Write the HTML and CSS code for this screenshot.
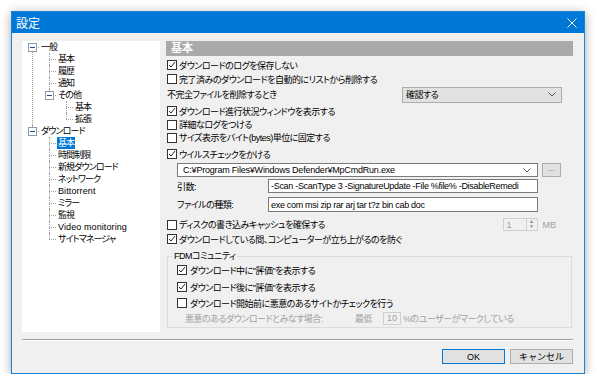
FILE: index.html
```html
<!DOCTYPE html>
<html lang="ja">
<head>
  <meta charset="UTF-8" />
  <title>設定</title>
  <link rel="stylesheet" href="styles.css">
</head>
<body>
  <div class="dialog">
    <div class="titlebar">
      <span class="title">設定</span>
      <svg class="close" width="10" height="10" viewBox="0 0 10 10"><path d="M0.5 0.5l9 9M9.5 0.5l-9 9" stroke="#fff" stroke-width="1" /></svg>
    </div>
    <div class="content">
      <div class="main">
        <!-- Left: category tree -->
        <div class="tree">
          <ul>
            <li>
              <div class="node"><span class="tg"></span><span class="lbl">一般</span></div>
              <ul>
                <li><div class="node"><span class="lbl">基本</span></div></li>
                <li><div class="node"><span class="lbl">履歴</span></div></li>
                <li><div class="node"><span class="lbl">通知</span></div></li>
                <li>
                  <div class="node"><span class="tg"></span><span class="lbl">その他</span></div>
                  <ul>
                    <li><div class="node"><span class="lbl">基本</span></div></li>
                    <li><div class="node"><span class="lbl">拡張</span></div></li>
                  </ul>
                </li>
              </ul>
            </li>
            <li>
              <div class="node"><span class="tg"></span><span class="lbl">ダウンロード</span></div>
              <ul>
                <li><div class="node"><span class="lbl sel">基本</span></div></li>
                <li><div class="node"><span class="lbl">時間制限</span></div></li>
                <li><div class="node"><span class="lbl">新規ダウンロード</span></div></li>
                <li><div class="node"><span class="lbl">ネットワーク</span></div></li>
                <li><div class="node"><span class="lbl en">Bittorrent</span></div></li>
                <li><div class="node"><span class="lbl">ミラー</span></div></li>
                <li><div class="node"><span class="lbl">監視</span></div></li>
                <li><div class="node"><span class="lbl en">Video monitoring</span></div></li>
                <li><div class="node"><span class="lbl">サイトマネージャ</span></div></li>
              </ul>
            </li>
          </ul>
        </div>

        <!-- Right: settings page -->
        <div class="page">
          <div class="page-title">基本</div>
          <div class="row r1"><span class="cb"><svg viewBox="0 0 8 8"><path d="M1 4l2 2 4-5" /></svg></span>ダウンロードのログを保存しない</div>
          <div class="row"><span class="cb"></span>完了済みのダウンロードを自動的にリストから削除する</div>
          <div class="row split">
            <span class="plain">不完全ファイルを削除するとき</span>
            <div class="select">確認する<svg width="8" height="5" viewBox="0 0 8 5"><path d="M0.5 0.5l3.5 3.5 3.5-3.5" /></svg></div>
          </div>
          <div class="row r4"><span class="cb"><svg viewBox="0 0 8 8"><path d="M1 4l2 2 4-5" /></svg></span>ダウンロード進行状況ウィンドウを表示する</div>
          <div class="row short"><span class="cb"></span>詳細なログをつける</div>
          <div class="row short"><span class="cb"></span>サイズ表示をバイト(bytes)単位に固定する</div>
          <div class="row r7"><span class="cb"><svg viewBox="0 0 8 8"><path d="M1 4l2 2 4-5" /></svg></span>ウイルスチェックをかける</div>
          <div class="path-row">
            <div class="combo">C:¥Program Files¥Windows Defender¥MpCmdRun.exe<svg width="8" height="5" viewBox="0 0 8 5"><path d="M0.5 0.5l3.5 3.5 3.5-3.5" /></svg></div>
            <div class="browse">...</div>
          </div>
          <div class="field args">
            <span class="field-label">引数:</span>
            <div class="input">-Scan -ScanType 3 -SignatureUpdate -File %file% -DisableRemedi</div>
          </div>
          <div class="field types">
            <span class="field-label">ファイルの種類:</span>
            <div class="input">exe com msi zip rar arj tar t?z bin cab doc</div>
          </div>
          <div class="row disk">
            <span class="cb"></span>ディスクの書き込みキャッシュを確保する
            <div class="spin-wrap">
              <div class="spin"><span>1</span><span class="arrows"><i>▲</i><i>▼</i></span></div>
              <span class="unit">MB</span>
            </div>
          </div>
          <div class="row"><span class="cb"><svg viewBox="0 0 8 8"><path d="M1 4l2 2 4-5" /></svg></span>ダウンロードしている間、コンピューターが立ち上がるのを防ぐ</div>

          <fieldset class="group">
            <legend>FDMコミュニティ</legend>
            <div class="row g1"><span class="cb"><svg viewBox="0 0 8 8"><path d="M1 4l2 2 4-5" /></svg></span>ダウンロード中に"評価"を表示する</div>
            <div class="row g2"><span class="cb"><svg viewBox="0 0 8 8"><path d="M1 4l2 2 4-5" /></svg></span>ダウンロード後に"評価"を表示する</div>
            <div class="row g3"><span class="cb"></span>ダウンロード開始前に悪意のあるサイトかチェックを行う</div>
            <div class="row g4 disabled">
              <span class="dis-label">悪意のあるダウンロードとみなす場合:</span>
              <span class="dis-min">最低</span>
              <span class="small-input">10</span>
              <span>%のユーザーがマークしている</span>
            </div>
          </fieldset>
        </div>
      </div>

      <div class="sep"></div>
      <div class="buttons">
        <button type="button" class="btn default">OK</button>
        <button type="button" class="btn">キャンセル</button>
      </div>
    </div>
  </div>
</body>
</html>
```

FILE: styles.css
```css
* {
  box-sizing: border-box;
}
body {
  margin: 0;
  background: #fff;
  font-family: "Liberation Sans", "Noto Sans CJK JP", sans-serif;
  font-size: 9px;
  font-feature-settings: "palt";
  color: #000;
}
.dialog {
  margin: 11px 0 0 11px;
  width: 574px;
  height: 363px;
  border: 1px solid #1a83d6;
  background: #f0f0f0;
  box-shadow: 0 2px 10px rgba(0, 0, 0, 0.35);
  display: flex;
  flex-direction: column;
}
.titlebar {
  height: 21px;
  background: #0078d7;
  color: #fff;
  display: flex;
  align-items: center;
  justify-content: space-between;
  padding: 0 7px 0 4px;
  flex-shrink: 0;
}
.title {
  font-size: 12px;
}
.content {
  padding: 8px 11px 9px 10px;
  flex: 1;
  display: flex;
  flex-direction: column;
}
.main {
  display: flex;
  gap: 6px;
  height: 291px;
}

/* Tree (left) */
.tree {
  width: 138px;
  background: #fff;
  letter-spacing: -0.9px;
  overflow: hidden;
}
.tree ul {
  list-style: none;
  margin: 0;
  padding: 0;
}
.tree li ul {
  margin-left: -1px;
}
.tree li {
  position: relative;
  padding-left: 18px;
}
.tree li::before {
  content: "";
  position: absolute;
  left: 10px;
  top: 6px;
  width: 7px;
  border-top: 1px dotted #a0a0a0;
}
.tree li::after {
  content: "";
  position: absolute;
  left: 10px;
  top: 0;
  bottom: 0;
  border-left: 1px dotted #a0a0a0;
}
.tree li:last-child::after {
  bottom: auto;
  height: 6px;
}
.tree > ul > li:first-child::after {
  top: 6px;
  height: auto;
  bottom: 0;
}
.node {
  height: 12px;
  line-height: 12px;
  display: flex;
}
.tg {
  position: absolute;
  left: 6px;
  top: 2px;
  width: 9px;
  height: 9px;
  border: 1px solid #8c9bb0;
  background: #fff;
  z-index: 1;
}
.tg::before {
  content: "";
  position: absolute;
  left: 1px;
  right: 1px;
  top: 3px;
  border-top: 1px solid #1f4a8a;
}
.lbl {
  padding: 0 1px;
  white-space: nowrap;
}
.lbl.en {
  letter-spacing: 0.1px;
}
.lbl.sel {
  background: #0078d7;
  color: #fff;
}

/* Settings page (right) */
.page {
  width: 407px;
  display: flex;
  flex-direction: column;
  letter-spacing: -0.5px;
}
.page-title {
  height: 15px;
  line-height: 15px;
  background: #aaaaaa;
  color: #fff;
  font-size: 11px;
  font-weight: bold;
  letter-spacing: 0;
  padding-left: 5px;
}
.row {
  display: flex;
  align-items: center;
  height: 14px;
  white-space: nowrap;
}
.row.r1 { margin-top: 2px; }
.row.r4 { margin-top: 1px; }
.row.r7 { margin-top: 3px; }
.row.short { height: 13px; }
.row.split {
  height: 17px;
  justify-content: space-between;
  padding-right: 11px;
}
.plain {
  padding-left: 1px;
}
.cb {
  width: 10px;
  height: 10px;
  margin: 0 2px 0 1px;
  border: 1px solid #333;
  background: #fff;
  flex-shrink: 0;
  display: flex;
}
.cb svg {
  width: 8px;
  height: 8px;
  fill: none;
  stroke: #222;
  stroke-width: 1;
}
.select {
  width: 160px;
  height: 16px;
  border: 1px solid #adadad;
  background: #e1e1e1;
  display: flex;
  align-items: center;
  justify-content: space-between;
  padding: 0 5px 0 3px;
}
.select svg,
.combo svg {
  fill: none;
  stroke: #555;
}
.path-row {
  display: flex;
  gap: 4px;
  margin: 2px 0 0 11px;
  height: 14px;
}
.combo {
  width: 361px;
  border: 1px solid #7a7a7a;
  background: #fff;
  display: flex;
  align-items: center;
  justify-content: space-between;
  padding: 0 6px 0 5px;
  white-space: nowrap;
  letter-spacing: -0.2px;
}
.browse {
  width: 19px;
  border: 1px solid #adadad;
  background: #e1e1e1;
  color: #666;
  font-size: 8px;
  text-align: center;
  line-height: 10px;
  letter-spacing: 0;
}
.field {
  display: flex;
  align-items: center;
  margin-left: 11px;
  white-space: nowrap;
}
.field.args {
  margin-top: 2px;
  height: 14px;
}
.field.types {
  margin-top: 4px;
  height: 15px;
}
.field-label {
  width: 91px;
}
.input {
  width: 270px;
  height: 100%;
  border: 1px solid #7a7a7a;
  background: #fff;
  padding: 0 2px;
  display: flex;
  align-items: center;
  overflow: hidden;
  letter-spacing: -0.3px;
}
.row.disk {
  margin-top: 5px;
  height: 15px;
}
.spin-wrap {
  margin-left: auto;
  margin-right: 17px;
  display: flex;
  align-items: center;
  color: #a0a0a0;
  letter-spacing: 0;
}
.spin {
  width: 35px;
  height: 13px;
  border: 1px solid #cfcfcf;
  display: flex;
  justify-content: space-between;
  align-items: center;
  padding-left: 3px;
}
.arrows {
  width: 11px;
  height: 11px;
  border-left: 1px solid #cfcfcf;
  display: flex;
  flex-direction: column;
  align-items: center;
}
.arrows i {
  font-style: normal;
  font-size: 5px;
  line-height: 5px;
  color: #888;
}
.unit {
  margin-left: 5px;
}

/* FDM community group */
.group {
  margin: 4px 1px 0;
  padding: 0 8px 2px;
  border: 1px solid #dcdcdc;
  min-width: 0;
}
.group legend {
  padding: 0 2px;
  margin-left: -4px;
  line-height: 12px;
}
.group .cb {
  margin-right: 3px;
}
.row.g1 { margin-top: 1px; }
.row.g2 { margin-top: 3px; }
.row.g3 { margin-top: 2px; }
.row.g4 { margin-top: 1px; }
.disabled {
  color: #a0a0a0;
}
.dis-label {
  width: 179px;
  padding-left: 9px;
}
.dis-min {
  width: 28px;
}
.small-input {
  width: 18px;
  height: 13px;
  border: 1px solid #cfcfcf;
  text-align: center;
  line-height: 11px;
  margin-right: 2px;
  letter-spacing: 0;
}

/* Bottom bar */
.sep {
  margin-top: 7px;
  height: 2px;
  border-top: 1px solid #a0a0a0;
  border-bottom: 1px solid #fff;
}
.buttons {
  margin-top: 8px;
  display: flex;
  justify-content: flex-end;
  gap: 5px;
}
.btn {
  width: 63px;
  height: 15px;
  padding: 0;
  font-family: inherit;
  font-size: 9px;
  background: #e1e1e1;
  border: 1px solid #adadad;
  color: #000;
}
.btn.default {
  border-color: #0078d7;
}
```
